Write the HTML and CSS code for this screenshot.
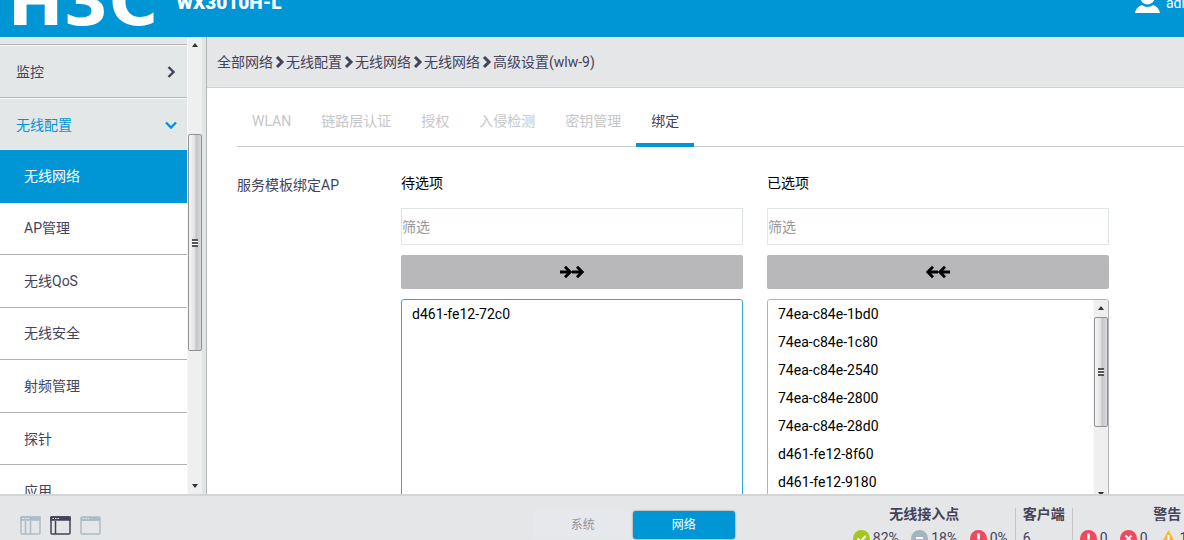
FILE: index.html
```html
<!DOCTYPE html>
<html lang="zh-CN">
<head>
<meta charset="utf-8">
<title>WX3010H-L</title>
<link rel="stylesheet" href="styles.css">
</head>
<body>
<svg class="defs" aria-hidden="true">
  <symbol id="chevron" viewBox="0 0 10 14"><path d="M2 2l5 5-5 5" fill="none" stroke="currentColor" stroke-width="3"/></symbol>
  <symbol id="arrow" viewBox="0 0 12 14"><path d="M0 7h10M5 1.800L10.200 7 5 12.200" fill="none" stroke="currentColor" stroke-width="2.800"/></symbol>
  <symbol id="alert" viewBox="0 0 17 17"><circle cx="8.500" cy="8.500" r="8.500" fill="#f0495f"/><path d="M7.200 3.500h2.600v6H7.200zM7.200 11h2.600v2.500H7.200z" fill="#fff"/></symbol>
</svg>
<header class="topbar">
  <div class="logo">H3C</div>
  <div class="model">WX3010H-L</div>
  <div class="user">
    <svg class="user-icon" viewBox="0 0 25 22"><circle cx="12.500" cy="6.500" r="7" fill="#fff"/><path d="M0 22c1-5 4-7 7-8 3 2.500 8 2.500 11 0 3 1 6 3 7 8z" fill="#fff"/></svg>
    <span>admin</span>
  </div>
</header>
<div class="workspace">
  <aside class="sidebar">
    <nav class="menu">
      <div class="menu-cap"></div>
      <a class="group" href="#monitor">监控<svg class="group-icon" viewBox="0 0 14 14"><path d="M4.500 2l5 5-5 5" fill="none" stroke="currentColor" stroke-width="2.400"/></svg></a>
      <a class="group open" href="#wireless">无线配置<svg class="group-icon" viewBox="0 0 14 14"><path d="M2 4.500l5 5 5-5" fill="none" stroke="currentColor" stroke-width="2.400"/></svg></a>
      <div class="submenu">
        <a class="item active" href="#network">无线网络</a>
        <a class="item" href="#ap">AP管理</a>
        <a class="item" href="#qos">无线QoS</a>
        <a class="item" href="#security">无线安全</a>
        <a class="item" href="#radio">射频管理</a>
        <a class="item" href="#probe">探针</a>
        <a class="item" href="#app">应用</a>
      </div>
    </nav>
    <div class="scrollbar">
      <span class="tri up"></span>
      <div class="track"><div class="thumb menu-thumb"><span class="grip"></span></div></div>
      <span class="tri down"></span>
    </div>
  </aside>
  <main class="main">
    <div class="crumbs">
      <a href="#all">全部网络</a><svg class="sep"><use href="#chevron"/></svg><a href="#config">无线配置</a><svg class="sep"><use href="#chevron"/></svg><a href="#net">无线网络</a><svg class="sep"><use href="#chevron"/></svg><a href="#net2">无线网络</a><svg class="sep"><use href="#chevron"/></svg><span>高级设置(wlw-9)</span>
    </div>
    <div class="page">
      <div class="tabs" role="tablist">
        <button class="tab" role="tab">WLAN</button>
        <button class="tab" role="tab">链路层认证</button>
        <button class="tab" role="tab">授权</button>
        <button class="tab" role="tab">入侵检测</button>
        <button class="tab" role="tab">密钥管理</button>
        <button class="tab current" role="tab" aria-selected="true">绑定</button>
      </div>
      <div class="binding">
        <div class="binding-label">服务模板绑定AP</div>
        <section class="picker">
          <label class="picker-title" for="available">待选项</label>
          <input class="filter" type="text" placeholder="筛选" aria-label="筛选待选项">
          <button class="move" aria-label="全部添加"><svg class="arrow"><use href="#arrow"/></svg><svg class="arrow"><use href="#arrow"/></svg></button>
          <div class="listbox focused">
            <select class="list" id="available" multiple size="9">
              <option>d461-fe12-72c0</option>
            </select>
          </div>
        </section>
        <section class="picker">
          <label class="picker-title" for="chosen">已选项</label>
          <input class="filter" type="text" placeholder="筛选" aria-label="筛选已选项">
          <button class="move" aria-label="全部移除"><svg class="arrow back"><use href="#arrow"/></svg><svg class="arrow back"><use href="#arrow"/></svg></button>
          <div class="listbox">
            <select class="list" id="chosen" multiple size="9">
              <option>74ea-c84e-1bd0</option>
              <option>74ea-c84e-1c80</option>
              <option>74ea-c84e-2540</option>
              <option>74ea-c84e-2800</option>
              <option>74ea-c84e-28d0</option>
              <option>d461-fe12-8f60</option>
              <option>d461-fe12-9180</option>
            </select>
            <div class="scrollbar list-scroll">
              <span class="tri up"></span>
              <div class="track"><div class="thumb list-thumb"><span class="grip"></span></div></div>
              <span class="tri down"></span>
            </div>
          </div>
        </section>
      </div>
    </div>
  </main>
</div>
<footer class="statusbar">
  <div class="layouts">
    <button class="layout" aria-label="三栏布局"><svg viewBox="0 0 21 19"><rect x="1" y="1" width="19" height="17" rx="1" fill="none" stroke="currentColor" stroke-width="1.500"/><path d="M1 1h19v3H1zM5.500 5v13M10.500 5v13" fill="currentColor" stroke="currentColor" stroke-width="1.500"/><path d="M2.500 2.500h7" stroke="#e5e7e8" stroke-dasharray="1.500 1"/></svg></button>
    <button class="layout selected" aria-label="两栏布局"><svg viewBox="0 0 21 19"><rect x="1" y="1" width="19" height="17" rx="1" fill="none" stroke="currentColor" stroke-width="1.500"/><path d="M1 1h19v3H1zM5.500 5v13" fill="currentColor" stroke="currentColor" stroke-width="1.500"/><path d="M2.500 2.500h7" stroke="#e5e7e8" stroke-dasharray="1.500 1"/></svg></button>
    <button class="layout" aria-label="单栏布局"><svg viewBox="0 0 21 19"><rect x="1" y="1" width="19" height="17" rx="1" fill="none" stroke="currentColor" stroke-width="1.500"/><path d="M1 1h19v4H1z" fill="currentColor"/><path d="M2.500 2.500h7" stroke="#e5e7e8" stroke-dasharray="1.500 1"/></svg></button>
  </div>
  <div class="switch">
    <button class="mode">系统</button>
    <button class="mode on">网络</button>
  </div>
  <div class="stats">
    <section class="stat aps">
      <h2 class="stat-title">无线接入点</h2>
      <div class="counts">
        <span class="count"><svg class="badge" viewBox="0 0 17 17"><circle cx="8.500" cy="8.500" r="8.500" fill="#a4c720"/><path d="M4.500 8.500l3 3 5-5.500" fill="none" stroke="#fff" stroke-width="2"/></svg>82%</span>
        <span class="count"><svg class="badge" viewBox="0 0 17 17"><circle cx="8.500" cy="8.500" r="8.500" fill="#a5b5bf"/><path d="M5 8h7" stroke="#fff" stroke-width="2"/></svg>18%</span>
        <span class="count"><svg class="badge"><use href="#alert"/></svg>0%</span>
      </div>
    </section>
    <section class="stat clients">
      <h2 class="stat-title">客户端</h2>
      <div class="counts">6</div>
    </section>
    <section class="stat alarms">
      <h2 class="stat-title">警告</h2>
      <div class="counts">
        <span class="count"><svg class="badge"><use href="#alert"/></svg>0</span>
        <span class="count"><svg class="badge" viewBox="0 0 17 17"><circle cx="8.500" cy="8.500" r="8.500" fill="#f0495f"/><path d="M5.500 5.500l6 6M11.500 5.500l-6 6" stroke="#fff" stroke-width="2"/></svg>0</span>
        <span class="count"><svg class="badge" viewBox="0 0 17 17"><path d="M8.500 0L17 16H0z" fill="#fdb52b"/><path d="M8.500 5v5M8.500 12v2" stroke="#fff" stroke-width="2"/></svg>1</span>
      </div>
    </section>
  </div>
</footer>
</body>
</html>
```
FILE: styles.css
```css
* { box-sizing: border-box; }
body {
  margin: 0;
  height: 100vh;
  display: flex;
  flex-direction: column;
  overflow: hidden;
  background: #fff;
  color: #44435a;
  font: 14px/20px Roboto, "Noto Sans CJK SC", sans-serif;
}
a { color: inherit; text-decoration: none; }
button, input, select { font: inherit; color: inherit; margin: 0; }
button { padding: 0; border: 0; background: none; }
.defs { position: absolute; width: 0; height: 0; }

.topbar {
  flex: none;
  height: 37px;
  display: flex;
  align-items: flex-end;
  padding-left: 8px;
  background: #0096d6;
  color: #fff;
  overflow: hidden;
}
.logo { padding-bottom: 4px; font: bold 66px/60px "DejaVu Sans", sans-serif; }
.model {
  margin: 0 auto 24px 19px;
  font-size: 19px;
  line-height: 20px;
  font-weight: 900;
}
.user {
  width: 49px;
  display: flex;
  align-items: flex-end;
  gap: 6px;
  padding-bottom: 24px;
  white-space: nowrap;
}
.user-icon { flex: none; width: 25px; height: 22px; }

.workspace { flex: 1; min-height: 0; display: flex; overflow: hidden; }
.sidebar {
  flex: none;
  width: 207px;
  display: flex;
  background: #e2e5e5;
  border-right: 1px solid #b4b6b8;
}
.menu { width: 187px; overflow: hidden; background: #fff; }
.menu-cap { height: 8px; background: #e3e7e7; border-bottom: 1px solid #b4b8b8; }
.group {
  height: 53px;
  display: flex;
  align-items: center;
  justify-content: space-between;
  padding: 0 9px 0 16px;
  background: #e3e7e7;
  border-top: 1px solid #f8f8f8;
  border-bottom: 1px solid #b4b8b8;
}
.group.open { height: 52px; color: #0096d6; border-bottom: 0; }
.group-icon { width: 14px; height: 14px; }
.submenu { height: 368px; display: grid; grid-auto-rows: 1fr; }
.item {
  display: flex;
  align-items: center;
  padding-left: 24px;
  border-bottom: 1px solid #aeb0b2;
}
.item.active { background: #0096d6; color: #fff; border-color: #0096d6; }

.scrollbar {
  width: 15px;
  display: flex;
  flex-direction: column;
  align-items: center;
  padding: 6px 0;
  background: #efefef;
  border-left: 1px solid #f8f8f8;
}
.tri { border: 3px solid transparent; }
.tri.up { border-top: 0; border-bottom: 4px solid #333; }
.tri.down { border-bottom: 0; border-top: 4px solid #333; }
.track { flex: 1; width: 100%; }
.thumb {
  width: 14px;
  display: flex;
  align-items: center;
  justify-content: center;
  border: 1px solid #919194;
  border-radius: 2px;
  background: linear-gradient(to right, #f6f6f7, #e2e2e4 45%, #c5c5ca 60%, #dadade);
}
.menu-thumb { height: 217px; margin-top: 87px; }
.grip {
  width: 6px;
  height: 8px;
  background: repeating-linear-gradient(#555 0 2px, #fff 2px 3px);
}

.main { flex: 1; min-width: 0; overflow: hidden; }
.crumbs {
  height: 51px;
  display: flex;
  align-items: center;
  padding-left: 10px;
  background: #e5e6e8;
  border-bottom: 1px solid #d0d1d3;
}
.sep { width: 10px; height: 14px; margin: 0 1px 0 2px; }
.page { padding-left: 30px; }
.tabs {
  height: 59px;
  display: flex;
  align-items: stretch;
  border-bottom: 1px solid #c8c9cb;
}
.tab {
  margin-bottom: -1px;
  padding: 10px 15px 0;
  border-bottom: 4px solid transparent;
  color: #c5c6c9;
}
.tab.current { color: #44435a; border-color: #0096d6; }

.binding {
  display: grid;
  grid-template-columns: 140px 1fr 1fr;
  column-gap: 24px;
  padding: 26px 75px 0 0;
}
.binding-label { padding-top: 2px; }
.picker { display: flex; flex-direction: column; gap: 10px; color: #000; }
.picker-title { height: 25px; }
.filter {
  width: 100%;
  height: 37px;
  padding: 0;
  border: 1px solid #dfe4e4;
  background: #fff;
}
.filter::placeholder { color: #999; }
.move {
  height: 34px;
  display: flex;
  align-items: center;
  justify-content: center;
  border-radius: 2px;
  background: #b8b8ba;
}
.arrow { width: 12px; height: 14px; }
.arrow.back { transform: rotate(180deg); }
.listbox {
  height: 208px;
  display: flex;
  border: 1px solid #b4b4b6;
  border-radius: 3px;
  overflow: hidden;
}
.listbox.focused { border-color: #2fa5d6; }
.list {
  flex: 1;
  min-width: 0;
  padding: 2px 0 0;
  border: 0;
  outline: 0;
  background: #fff;
  overflow: hidden;
}
.list option { padding: 4px 10px; line-height: 20px; min-height: 28px; }
.list-scroll { height: 202px; }
.list-thumb { height: 110px; margin-top: 7px; }

.statusbar {
  flex: none;
  height: 46px;
  display: grid;
  grid-template-columns: 45% auto 1fr;
  background: #e5e6e8;
  border-top: 2px solid #d3d5d7;
  overflow: hidden;
}
.layouts { display: flex; gap: 9px; padding: 20px 0 0 20px; }
.layout { width: 21px; height: 19px; color: #adbdc6; }
.layout.selected { color: #44435a; }
.layout svg { display: block; width: 21px; height: 19px; }
.switch { height: 28px; display: flex; margin-top: 15px; background: #e7e8ec; border-radius: 3px; }
.mode { width: 100px; color: #939398; font-size: 12px; }
.mode.on {
  width: 102px;
  border-radius: 3px;
  background: #0096d6;
  color: #fff;
  box-shadow: 0 0 2px #666;
}
.stats { display: flex; padding: 12px 0 0 118px; min-width: 0; overflow: hidden; }
.stat { flex: none; height: 48px; padding: 0 7px; }
.stat + .stat { border-left: 1px solid #c8c3c5; }
.aps { width: 162px; padding-left: 0; }
.alarms { width: 190px; }
.stat-title {
  margin: -4px 0 0;
  font-size: 14px;
  line-height: 20px;
  font-weight: 700;
  text-align: center;
}
.aps .stat-title { padding-right: 12px; }
.counts { display: flex; justify-content: space-between; line-height: 20px; padding-top: 4px; }
.count { display: flex; gap: 3px; height: 20px; align-items: center; }
.badge { width: 17px; height: 17px; }
.alarms .counts { justify-content: flex-start; gap: 12px; }
```
